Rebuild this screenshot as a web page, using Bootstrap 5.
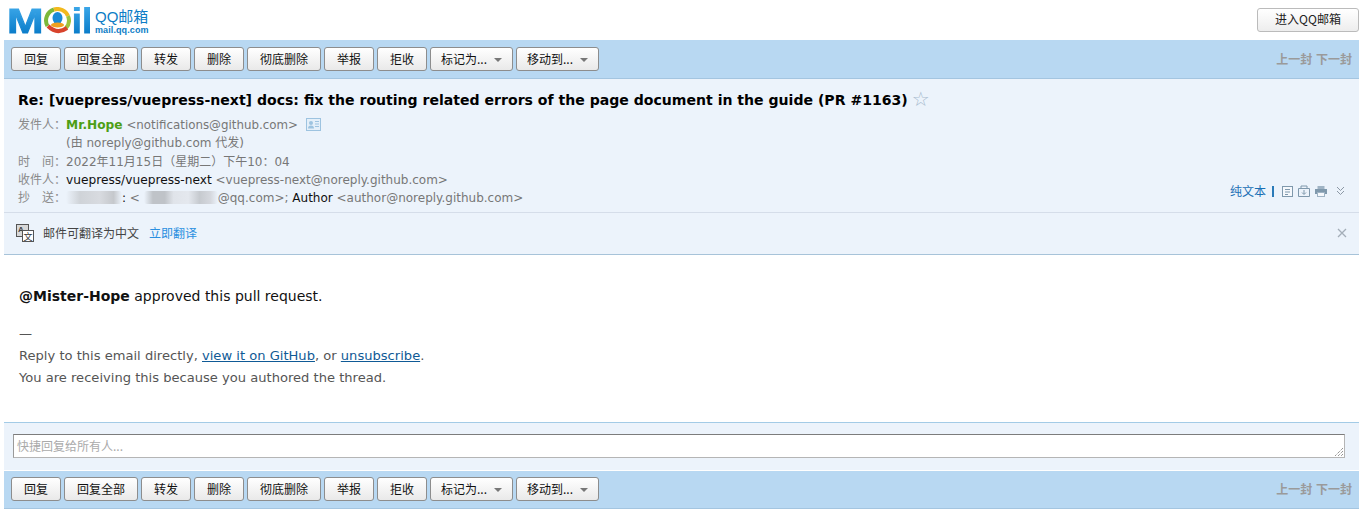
<!DOCTYPE html>
<html lang="zh-CN">
<head>
<meta charset="utf-8">
<title>QQ邮箱</title>
<link href="https://cdn.jsdelivr.net/npm/bootstrap@5.3.0/dist/css/bootstrap.min.css" rel="stylesheet">
<style>
html,body{background:#fff;height:511px;overflow:hidden}
body{font-family:"DejaVu Sans","Noto Sans CJK SC",sans-serif;font-size:12px;color:#000;line-height:18px}
.cjk{font-family:"Noto Sans CJK SC",sans-serif}
.page-wrap{padding:0 7px 0 4px}
.top-head{height:40px;align-items:flex-start}
.logo-box{height:40px;padding:7px 0 0 3px}
.logo-word{font:bold 35px/27px "Liberation Sans",sans-serif;height:27px;background:linear-gradient(#3aa6e8,#0a7cc9);-webkit-background-clip:text;background-clip:text;color:transparent;-webkit-text-stroke:1px transparent;display:block}
.logo-m{width:29px;margin-right:8px;transform:scaleX(1.25);transform-origin:left top}
.logo-il{width:19px;margin:0 4px 0 1px;letter-spacing:.5px}
.logo-side{color:#0d7dc6;line-height:1}
.logo-cn{font:15px/17px "Liberation Sans","Noto Sans CJK SC",sans-serif;height:17px;margin-top:1px}
.logo-en{font:bold 9px/10px "Liberation Sans",sans-serif;letter-spacing:.1px}
.enter-btn{width:102px;height:24px;margin-top:8px;padding:0 0 2px;font:12px/20px "Noto Sans CJK SC",sans-serif;color:#222;background:linear-gradient(#fff,#ededed);border:1px solid #bbb;border-radius:3px}
.tool-strip{background:#b8d8f2;border-bottom:1px solid #a4c5e0;padding:0 7px;gap:3px;align-items:flex-start}
.strip-top{height:39px;padding-top:7px}
.strip-low{height:38px;padding-top:6px}
.tool-btn{height:24px;padding:0 0 1px;font:12px/20px "Noto Sans CJK SC",sans-serif;color:#111;background:linear-gradient(#fff,#e9e9e9);border:1px solid #8d8d8d;border-radius:3px;display:flex;align-items:center;justify-content:center;white-space:nowrap}
.w50{width:50px}.w74{width:74px}.w83{width:83px}
.caret-mark{width:0;height:0;border:4px solid transparent;border-top:4px solid #777;border-bottom:0;margin:2px 0 0 7px}
.pager{color:#9a9a9a;font:bold 12px/18px "Noto Sans CJK SC",sans-serif;word-spacing:1px;margin:3px 0 0 auto}
.mail-head{height:134px;background:#ecf3fb;border-bottom:1px solid #d5dde9;padding:11px 0 0 14px;position:relative}
.subject{font-weight:700;font-size:14.07px;line-height:18px;margin-bottom:7px;height:18px;white-space:nowrap}
.star-mark{font-weight:400;color:#a9bccf;font-size:20px;line-height:18px;vertical-align:-1px}
.info-row{height:18.3px;line-height:18px;white-space:nowrap;color:#777;font-size:12px}
.addr-tight{font-size:11.85px}
.lbl{display:inline-block;width:48px;color:#8a8a8a;font:12px/18px "Noto Sans CJK SC",sans-serif}
.lbl-split{display:inline-flex;justify-content:space-between}
.sender{color:#4d9e15;font-weight:700;font-size:12.2px}
.dark{color:#111}
.name-wide{font-size:12.2px}
.blur-a,.blur-b{display:inline-block;height:13px;vertical-align:-2px;border-radius:3px;background:linear-gradient(90deg,#ecf3fb,#cfd3d8 25%,#d8dbe0 60%,#c5c8cc 85%,#ecf3fb)}
.blur-a{width:56px}
.blur-b{width:74px;background:linear-gradient(90deg,#ecf3fb,#bfc3c8 12%,#bfc3c8 28%,#e0e4ea 40%,#e4e8ee 60%,#c6cacf 75%,#d5d8de 90%,#ecf3fb)}
.tools-float{position:absolute;right:14px;top:103px;gap:5px;height:18px}
.plain-link{color:#1a6fb5;font:12px/18px "Noto Sans CJK SC",sans-serif;text-decoration:none}
.divide-bar{width:2px;height:11px;background:#2a7ab8;margin:0 3px 0 1px}
.chev-gap{margin-left:4px}
.trans-bar{height:42px;background:#ecf3fb;border-bottom:1px solid #a7c3d9;padding:0 12px 2px 12px;gap:9px;font:12px/18px "Noto Sans CJK SC",sans-serif;color:#444}
.trans-link{color:#2a8fe0;margin-left:1px;text-decoration:none}
.glyph-a{font:bold 8px "Liberation Sans",sans-serif;fill:#444}
.glyph-b{font:9px "Noto Sans CJK SC",sans-serif;fill:#333}
.mail-text{height:168px;padding:30px 0 0 15px;font-size:13.08px;line-height:22px;color:#555;border-bottom:1px solid #a3cbe6}
.mail-text p{margin:0}
.mail-text a{color:#0f5a96}
.mail-text .gap-para{margin-top:16px}
.handle{font-weight:700;color:#111}
.lead-in{color:#111;font-size:14px}
.reply-zone{height:48px;background:#ecf3fb;padding:11px 14px 0 9px;border-bottom:1px solid #fff}
.reply-input{width:100%;height:24px;border:1px solid #b5b5b5;border-top-color:#7c7c7c;border-left-color:#9a9a9a;background:#fff;color:#aaa;font:12px/22px "Noto Sans CJK SC",sans-serif;padding:0 3px;position:relative}
.grip{position:absolute;right:0;bottom:0}
</style>
</head>
<body>
<div class="page-wrap">
  <div class="top-head d-flex justify-content-between">
    <div class="logo-box d-flex">
      <div class="d-flex align-items-start">
        <span class="logo-word logo-m">M</span>
        <svg width="27" height="27" viewBox="0 0 27 27" aria-hidden="true">
          <path d="M3.500 19A11.500 11.500 0 0 1 10 2.500" fill="none" stroke="#7cb83a" stroke-width="4"/>
          <path d="M10 2.500A11.500 11.500 0 0 1 24 9" fill="none" stroke="#f2b91d" stroke-width="4"/>
          <path d="M24 9A11.500 11.500 0 0 1 22 21" fill="none" stroke="#9cc43d" stroke-width="4"/>
          <path d="M4 19Q13 28 23 21" fill="none" stroke="#d8432c" stroke-width="4"/>
          <ellipse cx="13.500" cy="11" rx="5" ry="6" fill="#1a8ad6"/>
          <ellipse cx="13.500" cy="18" rx="6.500" ry="2.500" fill="#f0a020"/>
        </svg>
        <span class="logo-word logo-il">il</span>
      </div>
      <div class="logo-side">
        <div class="logo-cn">QQ邮箱</div>
        <div class="logo-en">mail.qq.com</div>
      </div>
    </div>
    <button class="enter-btn" type="button">进入QQ邮箱</button>
  </div>

  <div class="tool-strip strip-top d-flex">
    <button class="tool-btn w50" type="button">回复</button>
    <button class="tool-btn w74" type="button">回复全部</button>
    <button class="tool-btn w50" type="button">转发</button>
    <button class="tool-btn w50" type="button">删除</button>
    <button class="tool-btn w74" type="button">彻底删除</button>
    <button class="tool-btn w50" type="button">举报</button>
    <button class="tool-btn w50" type="button">拒收</button>
    <button class="tool-btn w83" type="button">标记为...<span class="caret-mark"></span></button>
    <button class="tool-btn w83" type="button">移动到...<span class="caret-mark"></span></button>
    <span class="pager">上一封 下一封</span>
  </div>

  <div class="mail-head">
    <div class="subject">Re: [vuepress/vuepress-next] docs: fix the routing related errors of the page document in the guide (PR #1163)<span class="star-mark ms-1">☆</span></div>
    <div class="info-row"><span class="lbl">发件人：</span><span class="sender">Mr.Hope</span> <span class="addr-tight">&lt;notifications@github.com&gt;</span>
      <svg class="ms-1" width="15" height="13" viewBox="0 0 15 13" aria-hidden="true" style="vertical-align:-2px"><rect x=".5" y=".5" width="14" height="12" fill="#e4eff9" stroke="#9dc3e0"/><circle cx="5" cy="5" r="2" fill="#9dc3e0"/><path d="M2 10.500Q2 7.500 5 7.500T8 10.500Z" fill="#9dc3e0"/><path d="M9 3.500h4M9 6h4M9 8.500h4" stroke="#9dc3e0"/></svg>
    </div>
    <div class="info-row"><span class="lbl"></span>(<span class="cjk">由</span> noreply@github.com <span class="cjk">代发</span>)</div>
    <div class="info-row"><span class="lbl lbl-split"><span>时</span><span>间：</span></span>2022<span class="cjk">年</span>11<span class="cjk">月</span>15<span class="cjk">日（星期二）下午</span>10：04</div>
    <div class="info-row"><span class="lbl">收件人：</span><span class="dark name-wide">vuepress/vuepress-next</span> &lt;vuepress-next@noreply.github.com&gt;</div>
    <div class="info-row"><span class="lbl lbl-split"><span>抄</span><span>送：</span></span><span class="blur-a"></span><span class="dark">:</span> &lt; <span class="blur-b"></span>@qq.com&gt;; <span class="dark">Author</span> &lt;author@noreply.github.com&gt;</div>
    <div class="tools-float d-flex align-items-center">
      <a class="plain-link" href="#">纯文本</a><span class="divide-bar"></span>
      <svg width="11" height="11" viewBox="0 0 11 11" aria-hidden="true"><rect x=".5" y=".5" width="10" height="10" fill="#f5f8fc" stroke="#7f98ac"/><path d="M3 3.500h5M3 6h5M3 8.500h3" stroke="#7f98ac"/></svg>
      <svg width="12" height="12" viewBox="0 0 12 12" aria-hidden="true"><path d="M.5 3.500h11v8H.5zM3 3.500V1h6v2.500" fill="none" stroke="#7f98ac"/><path d="M6 5v4M4 7.500l2 2 2-2" fill="none" stroke="#7f98ac"/></svg>
      <svg width="12" height="11" viewBox="0 0 12 11" aria-hidden="true"><rect x="2.500" y="0" width="7" height="3" fill="#9fb3c4"/><rect x="0" y="3" width="12" height="5" fill="#7f98ac"/><rect x="2.500" y="6.500" width="7" height="4" fill="#f5f8fc" stroke="#9fb3c4"/></svg>
      <svg class="chev-gap" width="9" height="10" viewBox="0 0 9 10" aria-hidden="true"><path d="M1 1l3.500 3.500L8 1M1 5l3.500 3.500L8 5" fill="none" stroke="#8c98a5"/></svg>
    </div>
  </div>

  <div class="trans-bar d-flex align-items-center">
    <svg width="18" height="18" viewBox="0 0 18 18" aria-hidden="true"><rect x=".5" y=".5" width="12" height="12" fill="#d8d8d8" stroke="#555"/><text class="glyph-a" x="2" y="8">A</text><rect x="6.500" y="6.500" width="11" height="11" fill="#fff" stroke="#555"/><text class="glyph-b" x="7.500" y="15.500">文</text></svg>
    <span>邮件可翻译为中文</span><a class="trans-link" href="#">立即翻译</a>
    <svg class="ms-auto" width="10" height="10" viewBox="0 0 10 10" aria-hidden="true"><path d="M1 1l8 8M9 1l-8 8" stroke="#a4aeb8" stroke-width="1.300"/></svg>
  </div>

  <div class="mail-text">
    <p class="lead-in"><span class="handle">@Mister-Hope</span> approved this pull request.</p>
    <p class="gap-para">—</p>
    <p>Reply to this email directly, <a href="#">view it on GitHub</a>, or <a href="#">unsubscribe</a>.</p>
    <p>You are receiving this because you authored the thread.</p>
  </div>

  <div class="reply-zone">
    <div class="reply-input">快捷回复给所有人...
      <svg class="grip" width="10" height="10" viewBox="0 0 10 10" aria-hidden="true"><path d="M9 1L1 9M9 4L4 9M9 7L7 9" stroke="#666" stroke-dasharray="1 1"/></svg>
    </div>
  </div>

  <div class="tool-strip strip-low d-flex">
    <button class="tool-btn w50" type="button">回复</button>
    <button class="tool-btn w74" type="button">回复全部</button>
    <button class="tool-btn w50" type="button">转发</button>
    <button class="tool-btn w50" type="button">删除</button>
    <button class="tool-btn w74" type="button">彻底删除</button>
    <button class="tool-btn w50" type="button">举报</button>
    <button class="tool-btn w50" type="button">拒收</button>
    <button class="tool-btn w83" type="button">标记为...<span class="caret-mark"></span></button>
    <button class="tool-btn w83" type="button">移动到...<span class="caret-mark"></span></button>
    <span class="pager">上一封 下一封</span>
  </div>
</div>
<script src="https://cdn.jsdelivr.net/npm/bootstrap@5.3.0/dist/js/bootstrap.bundle.min.js"></script>
</body>
</html>
